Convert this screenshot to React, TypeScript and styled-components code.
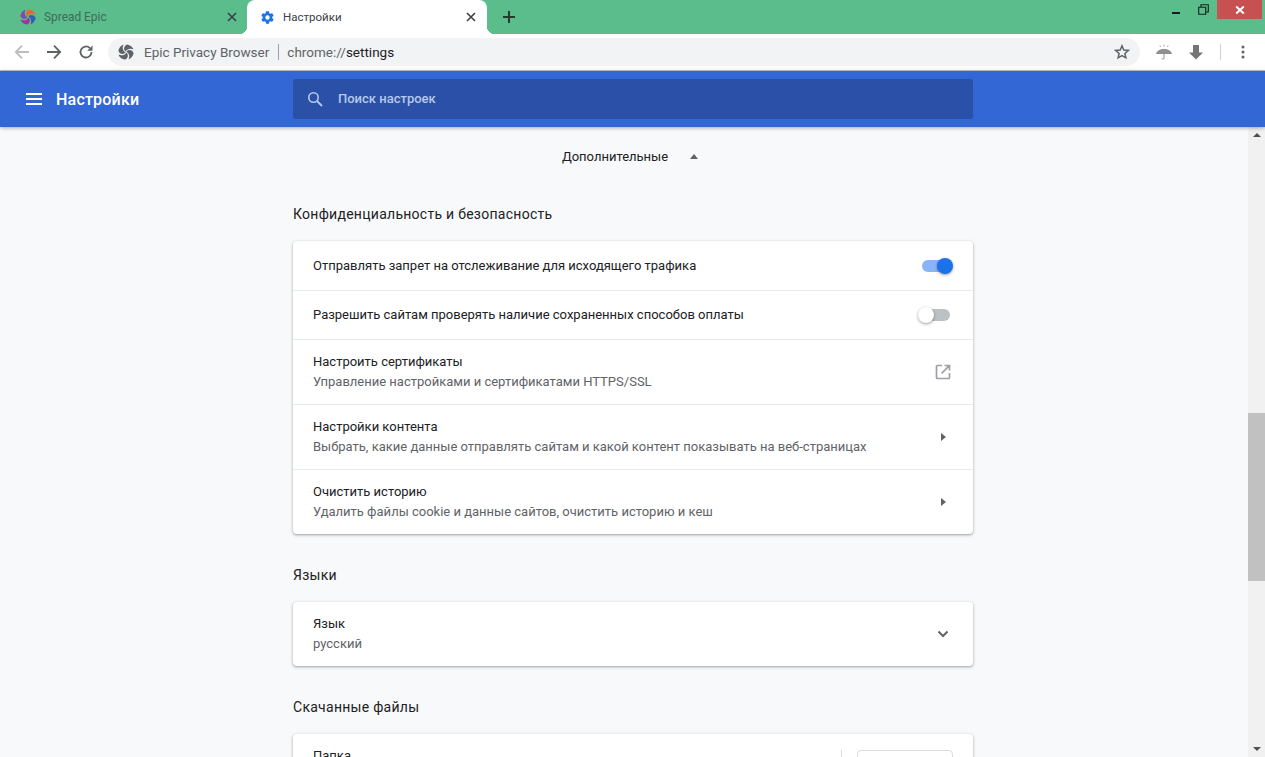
import React from 'react';
import styled, { createGlobalStyle } from 'styled-components';

const GlobalStyle = createGlobalStyle`
  html, body {
    margin: 0;
    padding: 0;
    height: 100%;
    overflow: hidden;
    font-family: Roboto, "Liberation Sans", sans-serif;
  }
  #root { height: 100%; }
`;

const Window = styled.div`
  display: flex;
  flex-direction: column;
  height: 757px;
  overflow: hidden;
  background: #f8f9fa;
`;

const TabStrip = styled.div`
  display: flex;
  height: 34px;
  flex: none;
  background: #5bbd8c;
`;

const Tab = styled.div<{ $active?: boolean }>`
  position: relative;
  display: flex;
  align-items: center;
  box-sizing: border-box;
  width: ${(p) => (p.$active ? '240px' : '247px')};
  padding: ${(p) => (p.$active ? '0 1px 0 13px' : '0 0 0 20px')};
  border-radius: 8px 8px 0 0;
  background: ${(p) => (p.$active ? '#fff' : 'transparent')};
  font-size: ${(p) => (p.$active ? '11.5px' : '11.9px')};
  color: ${(p) => (p.$active ? '#3c4043' : '#3f6b58')};
  ${(p) =>
    p.$active &&
    `
    &::before, &::after {
      content: '';
      position: absolute;
      bottom: 0;
      width: 8px;
      height: 8px;
    }
    &::before {
      left: -8px;
      background: radial-gradient(circle at 0 0, transparent 8px, #fff 8.5px);
    }
    &::after {
      right: -8px;
      background: radial-gradient(circle at 100% 0, transparent 8px, #fff 8.5px);
    }
  `}
`;

const TabTitle = styled.span`
  flex: 1;
  margin-left: 8px;
  white-space: nowrap;
`;

const TabClose = styled.svg`
  width: 10px;
  height: 10px;
  flex: none;
  margin-right: 10px;
`;

const NewTab = styled.svg`
  width: 14px;
  height: 14px;
  margin: 10px 0 0 15px;
`;

const WindowControls = styled.div`
  display: flex;
  align-items: flex-start;
  margin-left: auto;
  margin-right: 3px;
`;

const WindowButton = styled.div`
  display: flex;
  align-items: center;
  justify-content: center;
  width: 26px;
  height: 19px;
  margin-right: 1px;
`;

const CloseButton = styled(WindowButton)`
  width: 45px;
  margin-right: 0;
  background: #c75050;
`;

const Toolbar = styled.div`
  display: flex;
  align-items: center;
  box-sizing: border-box;
  height: 37px;
  flex: none;
  padding-left: 14px;
  background: #fff;
  border-bottom: 1px solid #c4c4c4;
`;

const NavIcon = styled.svg<{ $gap?: number }>`
  width: 16px;
  height: 16px;
  flex: none;
  margin-right: ${(p) => p.$gap ?? 16}px;
`;

const Omnibox = styled.div`
  display: flex;
  align-items: center;
  flex: none;
  box-sizing: border-box;
  width: 1032px;
  height: 28px;
  padding: 0 10px;
  border-radius: 14px;
  background: #f1f3f4;
  font-size: 13.5px;
  color: #5f6368;
`;

const OmniHost = styled.span`
  margin-left: 10px;
`;

const OmniDivider = styled.span`
  width: 1px;
  height: 16px;
  margin: 0 8.5px;
  background: #9aa0a6;
`;

const OmniPath = styled.span`
  color: #202124;
`;

const OmniStar = styled.svg`
  width: 16px;
  height: 16px;
  margin-left: auto;
`;

const ToolIcons = styled.div`
  display: flex;
  align-items: center;
  margin-left: 16px;
`;

const ToolDivider = styled.span`
  width: 1px;
  height: 16px;
  margin: 0 20px 0 16px;
  background: #d0d0d0;
`;

const Header = styled.header`
  position: relative;
  z-index: 1;
  display: flex;
  align-items: center;
  box-sizing: border-box;
  height: 56px;
  flex: none;
  background: #3367d6;
  box-shadow: 0 1px 4px rgba(0, 0, 0, 0.32);
`;

const HeaderLead = styled.div`
  display: flex;
  align-items: center;
  width: 293px;
  flex: none;
  box-sizing: border-box;
  padding-left: 26px;
  color: #fff;
  font-size: 16px;
  font-weight: 500;
  letter-spacing: 0.2px;
`;

const Burger = styled.svg`
  width: 16px;
  height: 12px;
  margin-right: 14px;
`;

const SearchBox = styled.div`
  display: flex;
  align-items: center;
  box-sizing: border-box;
  width: 680px;
  height: 40px;
  padding: 0 0 1px 14px;
  border-radius: 2px;
  background: #2a50a8;
  color: #b8c9ec;
  font-size: 13px;
  font-weight: 500;
`;

const SearchIcon = styled.svg`
  width: 16px;
  height: 16px;
  margin-right: 15px;
`;

const Body = styled.div`
  flex: 1;
  min-height: 0;
  display: flex;
`;

const Main = styled.main`
  flex: 1;
  min-width: 0;
  overflow: hidden;
  padding-left: 293px;
`;

const Column = styled.div`
  width: 680px;
`;

const Advanced = styled.div`
  display: flex;
  align-items: center;
  justify-content: center;
  box-sizing: border-box;
  height: 60px;
  padding: 0 6px 2px 0;
  color: #202124;
  font-size: 13px;
`;

const AdvancedArrow = styled.span`
  width: 0;
  height: 0;
  margin-left: 22px;
  border-left: 4.5px solid transparent;
  border-right: 4.5px solid transparent;
  border-bottom: 5px solid #5f6368;
`;

const SectionTitle = styled.h2`
  margin: 0;
  height: 54px;
  box-sizing: border-box;
  padding-top: 19px;
  line-height: 17px;
  font-size: 14px;
  font-weight: 400;
  letter-spacing: 0.27px;
  color: #202124;
`;

const Card = styled.section`
  margin-bottom: 14px;
  border-radius: 4px;
  background: #fff;
  box-shadow: 0 1px 2px rgba(60, 64, 67, 0.3), 0 1px 3px 1px rgba(60, 64, 67, 0.15);
`;

const Row = styled.div<{ $tall?: boolean; $first?: boolean }>`
  display: flex;
  align-items: center;
  justify-content: space-between;
  box-sizing: border-box;
  height: ${(p) => (p.$tall ? (p.$first ? '64px' : '65px') : '49px')};
  padding: 0 20px;
  border-top: ${(p) => (p.$first ? 'none' : '1px solid #e8eaed')};
  font-size: 13px;
  color: #202124;
`;

const RowText = styled.div`
  display: flex;
  flex-direction: column;
  gap: 4px;
  line-height: 16px;
`;

const Secondary = styled.div`
  color: #5f6368;
`;

const Toggle = styled.div<{ $on?: boolean }>`
  position: relative;
  width: 28px;
  height: 12px;
  margin-right: 3px;
  border-radius: 6px;
  background: ${(p) => (p.$on ? '#8ab4f8' : '#bdc1c6')};

  &::after {
    content: '';
    position: absolute;
    top: -2px;
    left: ${(p) => (p.$on ? '15px' : '-4px')};
    width: 16px;
    height: 16px;
    border-radius: 50%;
    background: ${(p) => (p.$on ? '#1a73e8' : '#fff')};
    box-shadow: 0 1px 3px rgba(0, 0, 0, 0.4);
  }
`;

const RowIcon = styled.svg`
  width: 18px;
  height: 18px;
  flex: none;
  margin-right: 1px;
`;

const SubArrow = styled.span`
  width: 0;
  height: 0;
  margin-right: 7px;
  border-top: 4px solid transparent;
  border-bottom: 4px solid transparent;
  border-left: 5px solid #5f6368;
`;

const FolderRow = styled(Row)`
  height: 60px;
  align-items: flex-start;
  padding: 14px 20px 0;
`;

const FolderActions = styled.div`
  display: flex;
  align-items: stretch;
  height: 32px;
  margin-top: 2px;
`;

const VDivider = styled.div`
  width: 1px;
  margin-right: 15px;
  background: #dadce0;
`;

const GhostButton = styled.div`
  width: 96px;
  height: 32px;
  box-sizing: border-box;
  border: 1px solid #dadce0;
  border-radius: 4px;
  background: #fff;
`;

const Scrollbar = styled.div`
  display: flex;
  flex-direction: column;
  align-items: center;
  width: 17px;
  flex: none;
  background: #f1f1f1;
`;

const ScrollArrow = styled.span<{ $down?: boolean }>`
  flex: none;
  width: 0;
  height: 0;
  margin: ${(p) => (p.$down ? '0 0 6px' : '6px 0 0')};
  border-left: 4px solid transparent;
  border-right: 4px solid transparent;
  ${(p) => (p.$down ? 'border-top: 4px solid #505050;' : 'border-bottom: 4px solid #505050;')}
`;

const ScrollTrack = styled.div`
  flex: 1;
  align-self: stretch;
  padding-top: 276px;
`;

const ScrollThumb = styled.div`
  height: 168px;
  background: #c1c1c1;
`;

// one swirl blade of the Epic logo, rotated around the middle for each colour
function Pinwheel({ colors }: { colors: string[] }) {
  return (
    <svg width="16" height="16" viewBox="0 0 16 16" style={{ flex: 'none' }}>
      {colors.map((color, i) => (
        <path
          key={i}
          d="M7.400 7.600C5.300 5.400 5.700 1.500 9.300.4 12.200.900 14.600 2.900 15.500 5.600 13.300 4.300 9.600 4.200 7.400 7.600z"
          fill={color}
          transform={`rotate(${i * 90} 8 8)`}
        />
      ))}
    </svg>
  );
}

function CloseGlyph() {
  return (
    <TabClose viewBox="0 0 10 10">
      <path d="M1 1l8 8M9 1L1 9" stroke="#3c4043" strokeWidth="1.600" fill="none" />
    </TabClose>
  );
}

type SettingRow = { title: string; sub?: string; trail: React.ReactNode };

const privacyRows: SettingRow[] = [
  { title: 'Отправлять запрет на отслеживание для исходящего трафика', trail: <Toggle $on /> },
  { title: 'Разрешить сайтам проверять наличие сохраненных способов оплаты', trail: <Toggle /> },
  {
    title: 'Настроить сертификаты',
    sub: 'Управление настройками и сертификатами HTTPS/SSL',
    trail: (
      <RowIcon viewBox="0 0 18 18">
        <path
          d="M8 2.500H3.500a1 1 0 0 0-1 1v11a1 1 0 0 0 1 1h11a1 1 0 0 0 1-1V10M10.500 2.500h5v5M15.300 2.700L7.500 10.500"
          fill="none"
          stroke="#9aa0a6"
          strokeWidth="1.700"
        />
      </RowIcon>
    ),
  },
  {
    title: 'Настройки контента',
    sub: 'Выбрать, какие данные отправлять сайтам и какой контент показывать на веб-страницах',
    trail: <SubArrow />,
  },
  {
    title: 'Очистить историю',
    sub: 'Удалить файлы cookie и данные сайтов, очистить историю и кеш',
    trail: <SubArrow />,
  },
];

export default function App() {
  return (
    <Window>
      <GlobalStyle />
      <TabStrip>
        <Tab>
          <Pinwheel colors={['#e8662c', '#2c62ad', '#a0359f', '#7a4fa8']} />
          <TabTitle>Spread Epic</TabTitle>
          <CloseGlyph />
        </Tab>
        <Tab $active>
          <svg width="15" height="15" viewBox="0 0 24 24" style={{ flex: 'none' }}>
            <path
              fill="#1a73e8"
              d="M19.430 12.980c.04-.32.07-.64.07-.98s-.03-.66-.07-.98l2.110-1.650c.19-.15.240-.42.120-.64l-2-3.460c-.12-.22-.39-.3-.61-.22l-2.490 1c-.52-.4-1.080-.73-1.690-.98l-.38-2.650A.49.490 0 0 0 14 2h-4c-.25 0-.46.18-.49.420l-.38 2.650c-.61.25-1.170.59-1.690.98l-2.490-1c-.23-.09-.49 0-.61.22l-2 3.460c-.13.220-.07.490.12.640l2.110 1.650c-.04.320-.07.650-.07.980s.03.660.07.980l-2.110 1.650c-.19.150-.24.420-.12.640l2 3.460c.12.220.39.300.61.220l2.490-1c.52.400 1.080.730 1.690.980l.38 2.650c.03.240.24.420.49.420h4c.25 0 .46-.18.49-.42l.38-2.650c.61-.25 1.170-.59 1.690-.98l2.490 1c.23.090.49 0 .61-.22l2-3.460c.12-.22.07-.49-.12-.64l-2.110-1.650zM12 15.500a3.500 3.500 0 1 1 0-7 3.500 3.500 0 0 1 0 7z"
            />
          </svg>
          <TabTitle>Настройки</TabTitle>
          <CloseGlyph />
        </Tab>
        <NewTab viewBox="0 0 14 14">
          <path d="M7 1v12M1 7h12" stroke="#263a30" strokeWidth="2" fill="none" />
        </NewTab>
        <WindowControls>
          <WindowButton>
            <svg width="9" height="3" viewBox="0 0 9 3" style={{ marginTop: 5 }}>
              <rect width="8" height="2" y="1" fill="#1c1c1c" />
            </svg>
          </WindowButton>
          <WindowButton>
            <svg width="11" height="11" viewBox="0 0 11 11">
              <path d="M.7 3.200h7v7h-7zM3 3V.7h7.300V8H8" fill="none" stroke="#1c1c1c" strokeWidth="1.100" />
            </svg>
          </WindowButton>
          <CloseButton>
            <svg width="10" height="10" viewBox="0 0 10 10">
              <path d="M1.200 1.500l7.600 7M8.800 1.500l-7.600 7" stroke="#fff" strokeWidth="2" fill="none" />
            </svg>
          </CloseButton>
        </WindowControls>
      </TabStrip>

      <Toolbar>
        <NavIcon viewBox="0 0 16 16">
          <path d="M15 8H2M8 1.700L1.800 8 8 14.300" fill="none" stroke="#bdbdbd" strokeWidth="1.800" />
        </NavIcon>
        <NavIcon viewBox="0 0 16 16">
          <path d="M1 8h13M8 1.700L14.200 8 8 14.300" fill="none" stroke="#5f6368" strokeWidth="1.800" />
        </NavIcon>
        <NavIcon viewBox="0 0 16 16" $gap={14}>
          <path d="M13.500 8a5.500 5.500 0 1 1-1.600-3.900" fill="none" stroke="#5f6368" strokeWidth="1.800" />
          <path d="M14.500 1.500v5.300H9.200z" fill="#5f6368" />
        </NavIcon>
        <Omnibox>
          <Pinwheel colors={['#5f6368', '#5f6368', '#5f6368', '#5f6368']} />
          <OmniHost>Epic Privacy Browser</OmniHost>
          <OmniDivider />
          <span>chrome://</span>
          <OmniPath>settings</OmniPath>
          <OmniStar viewBox="0 0 16 16">
            <path
              d="M8 1.800l1.800 4.200 4.500.4-3.400 3 1 4.400L8 11.500l-3.900 2.300 1-4.400-3.400-3 4.500-.4z"
              fill="none"
              stroke="#5f6368"
              strokeWidth="1.500"
            />
          </OmniStar>
        </Omnibox>
        <ToolIcons>
          <NavIcon viewBox="0 0 16 16">
            <path d="M0 10c.8-3.300 4-5 8-5s7.200 1.700 8 5z" fill="#8f8f8f" />
            <path d="M8 10v4.300c0 1.200-2 1.200-2 0" fill="none" stroke="#8f8f8f" strokeWidth="1" />
            <path d="M8 .5v2M4 1.500l.5 1.500M12 1.500L11.500 3" stroke="#a8a8a8" strokeWidth="1" />
          </NavIcon>
          <NavIcon viewBox="0 0 16 16" $gap={0}>
            <path d="M5 1h6v7.500h4L8 15.500 1 8.500h4z" fill="#757575" />
          </NavIcon>
          <ToolDivider />
          <svg width="4" height="14" viewBox="0 0 4 14">
            <circle cx="2" cy="2" r="1.500" fill="#5f6368" />
            <circle cx="2" cy="7" r="1.500" fill="#5f6368" />
            <circle cx="2" cy="12" r="1.500" fill="#5f6368" />
          </svg>
        </ToolIcons>
      </Toolbar>

      <Header>
        <HeaderLead>
          <Burger viewBox="0 0 16 12">
            <path d="M0 1h16M0 6h16M0 11h16" stroke="#fff" strokeWidth="2" fill="none" />
          </Burger>
          Настройки
        </HeaderLead>
        <SearchBox>
          <SearchIcon viewBox="0 0 16 16">
            <circle cx="6.500" cy="6.500" r="4.700" fill="none" stroke="#b8c9ec" strokeWidth="1.600" />
            <path d="M10 10l5 5" stroke="#b8c9ec" strokeWidth="1.800" />
          </SearchIcon>
          Поиск настроек
        </SearchBox>
      </Header>

      <Body>
        <Main>
          <Column>
            <Advanced>
              Дополнительные
              <AdvancedArrow />
            </Advanced>

            <SectionTitle>Конфиденциальность и безопасность</SectionTitle>
            <Card>
              {privacyRows.map((row, i) => (
                <Row key={row.title} $first={i === 0} $tall={Boolean(row.sub)}>
                  <RowText>
                    <div>{row.title}</div>
                    {row.sub && <Secondary>{row.sub}</Secondary>}
                  </RowText>
                  {row.trail}
                </Row>
              ))}
            </Card>

            <SectionTitle>Языки</SectionTitle>
            <Card>
              <Row $first $tall>
                <RowText>
                  <div>Язык</div>
                  <Secondary>русский</Secondary>
                </RowText>
                <RowIcon viewBox="0 0 18 18">
                  <path d="M4.500 6.500L9 11l4.500-4.500" fill="none" stroke="#5f6368" strokeWidth="2" />
                </RowIcon>
              </Row>
            </Card>

            <SectionTitle>Скачанные файлы</SectionTitle>
            <Card>
              <FolderRow $first>
                <div>Папка</div>
                <FolderActions>
                  <VDivider />
                  <GhostButton />
                </FolderActions>
              </FolderRow>
            </Card>
          </Column>
        </Main>
        <Scrollbar>
          <ScrollArrow />
          <ScrollTrack>
            <ScrollThumb />
          </ScrollTrack>
          <ScrollArrow $down />
        </Scrollbar>
      </Body>
    </Window>
  );
}
